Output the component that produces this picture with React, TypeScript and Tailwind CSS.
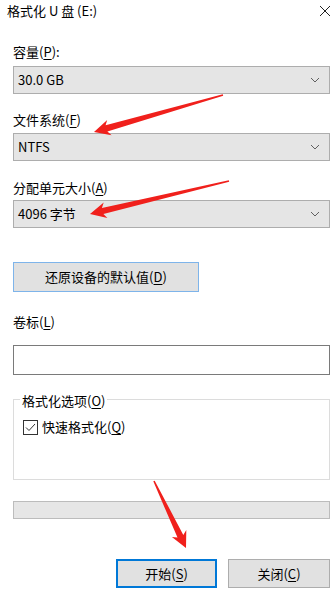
const font = 'font-["Microsoft_YaHei_UI","Noto_Sans_CJK_SC","Noto_Sans",sans-serif]';

function Chevron() {
  return (
    <svg width="10" height="6" viewBox="0 0 10 6" className="shrink-0">
      <polyline points="1,1 5,5 9,1" fill="none" stroke="#606060" strokeWidth="1" />
    </svg>
  );
}

function Select({ value }: { value: string }) {
  return (
    <div className="flex h-[28px] items-center justify-between border border-[#adadad] bg-[#e5e5e5] pl-[4px] pr-[9px]">
      <span>{value}</span>
      <Chevron />
    </div>
  );
}

function Key({ k }: { k: string }) {
  return <u className="underline-offset-2">{k}</u>;
}

// tapered red arrow from tail to tip
function arrowPoints(tx: number, ty: number, px: number, py: number) {
  const dx = px - tx;
  const dy = py - ty;
  const len = Math.hypot(dx, dy);
  const ux = dx / len;
  const uy = dy / len;
  const nx = -uy;
  const ny = ux;
  const headLen = 16;
  const headW = 8;
  const baseW = 3.2;
  const tailW = 0.8;
  const bx = px - ux * headLen;
  const by = py - uy * headLen;
  const pts = [
    [tx + nx * tailW, ty + ny * tailW],
    [bx + ux * 3 + nx * baseW, by + uy * 3 + ny * baseW],
    [bx + nx * headW, by + ny * headW],
    [px, py],
    [bx - nx * headW, by - ny * headW],
    [bx + ux * 3 - nx * baseW, by + uy * 3 - ny * baseW],
    [tx - nx * tailW, ty - ny * tailW],
  ];
  return pts.map((p) => p.map((v) => v.toFixed(1)).join(',')).join(' ');
}

export default function App() {
  return (
    <div className={`relative h-[593px] w-[334px] overflow-hidden bg-white text-[13px] leading-[16px] text-black ${font}`}>
      <div className="flex h-[20px] items-center justify-between pl-[7px] pr-[3px] pt-[1px]">
        <span>格式化 U 盘 (E:)</span>
        <svg width="12" height="12" viewBox="0 0 12 12">
          <path d="M1 1 L11 11 M11 1 L1 11" stroke="#222" strokeWidth="1" />
        </svg>
      </div>

      <div className="flex flex-col pl-[13px] pr-[4px]">
        <div className="mt-[24px]">
          容量(<Key k="P" />):
        </div>
        <div className="mt-[6px]">
          <Select value="30.0 GB" />
        </div>

        <div className="mt-[18px]">
          文件系统(<Key k="F" />)
        </div>
        <div className="mt-[5px]">
          <Select value="NTFS" />
        </div>

        <div className="mt-[19px]">
          分配单元大小(<Key k="A" />)
        </div>
        <div className="mt-[4px]">
          <Select value="4096 字节" />
        </div>

        <div className="mt-[34px] flex h-[30px] w-[186px] items-center justify-center border border-[#7eb4ea] bg-[#e1e1e1]">
          还原设备的默认值(<Key k="D" />)
        </div>

        <div className="mt-[22px]">
          卷标(<Key k="L" />)
        </div>
        <div className="mt-[15px] h-[30px] border border-[#7a7a7a] bg-white" />

        <div className="relative mt-[24px] h-[81px] border border-[#dcdcdc]">
          <span className="absolute -top-[7px] left-[6px] bg-white px-[2px]">
            格式化选项(<Key k="O" />)
          </span>
          <div className="ml-[9px] mt-[19px] flex items-center gap-[4px]">
            <svg width="15" height="15" viewBox="0 0 15 15">
              <rect x="0.5" y="0.5" width="14" height="14" fill="white" stroke="#333" />
              <polyline points="3,7.5 6,10.5 12,4" fill="none" stroke="#333" strokeWidth="1" />
            </svg>
            <span>
              快速格式化(<Key k="Q" />)
            </span>
          </div>
        </div>

        <div className="mt-[21px] h-[18px] border border-[#bcbcbc] bg-[#e6e6e6]" />

        <div className="mt-[40px] flex justify-end gap-[11px]">
          <div className="flex h-[29px] w-[101px] items-center justify-center border-2 border-[#0078d7] bg-[#e1e1e1]">
            开始(<Key k="S" />)
          </div>
          <div className="flex h-[29px] w-[102px] items-center justify-center border border-[#adadad] bg-[#e1e1e1]">
            关闭(<Key k="C" />)
          </div>
        </div>
      </div>

      <svg className="pointer-events-none absolute inset-0" width="334" height="593">
        <polygon points={arrowPoints(223, 95, 94, 132)} fill="#f0201c" />
        <polygon points={arrowPoints(229, 181, 90, 214)} fill="#f0201c" />
        <polygon points={arrowPoints(154, 481, 186, 548)} fill="#f0201c" />
      </svg>
    </div>
  );
}
